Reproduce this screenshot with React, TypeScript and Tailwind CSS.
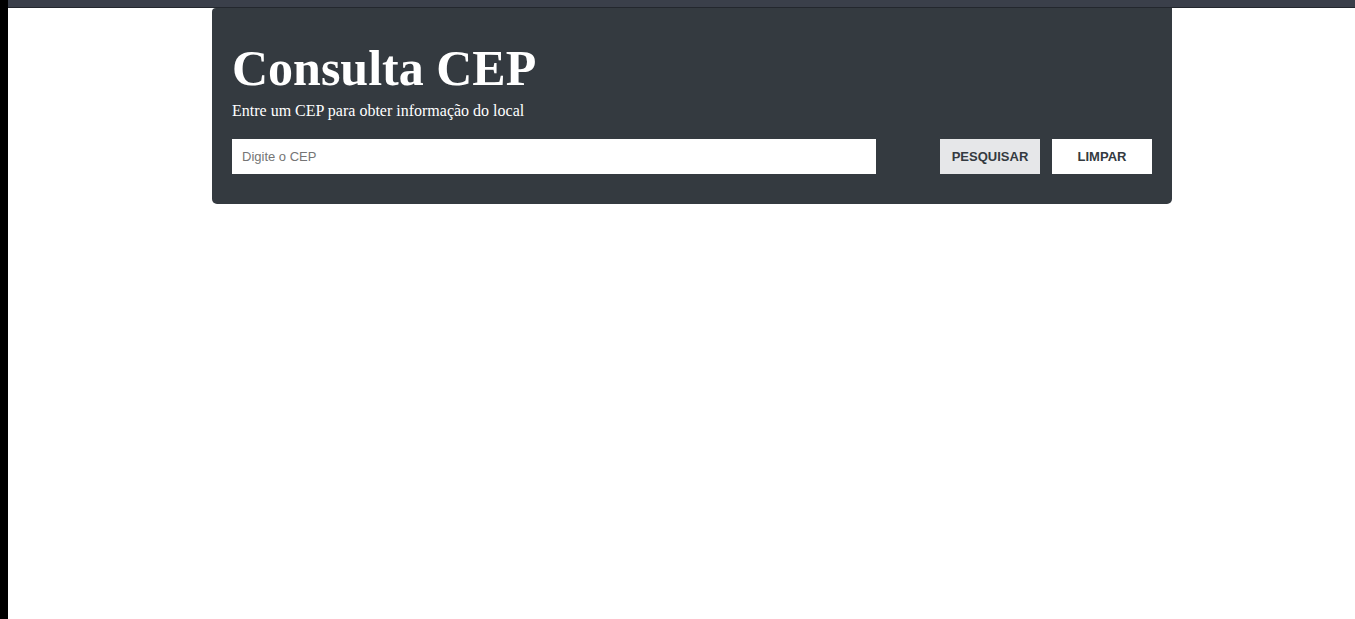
export default function App() {
  return (
    <div className="flex min-h-[619px] bg-black">
      <div className="w-[8px] shrink-0 bg-black" />
      <div className="flex-1 flex flex-col bg-white">
        {/* top strip */}
        <div className="h-[8px] bg-[#3a3f4a] border-b border-[#23272e]" />

        <main className="w-[960px] ml-[204px] bg-[#343a40] rounded-b-[5px] rounded-tl-[4px] px-[20px] pt-[32px] pb-[30px]">
          <h1 className="font-['Liberation_Serif',serif] font-bold text-[50px] leading-[56px] text-white">
            Consulta CEP
          </h1>
          <p className="font-['Liberation_Serif',serif] text-[16px] leading-[20px] text-white mt-[5px]">
            Entre um CEP para obter informação do local
          </p>

          <div className="flex items-center justify-between mt-[18px]">
            <input
              type="text"
              placeholder="Digite o CEP"
              className="w-[644px] h-[35px] bg-white px-[10px] text-[13px] font-['Liberation_Sans',sans-serif] text-[#333] placeholder:text-[#757575] outline-none"
            />
            <div className="flex gap-[12px]">
              <button className="w-[100px] h-[35px] bg-[#e6e7e9] text-[#343a40] text-[13px] font-bold font-['Liberation_Sans',sans-serif]">
                PESQUISAR
              </button>
              <button className="w-[100px] h-[35px] bg-white text-[#343a40] text-[13px] font-bold font-['Liberation_Sans',sans-serif]">
                LIMPAR
              </button>
            </div>
          </div>
        </main>
      </div>
    </div>
  );
}
